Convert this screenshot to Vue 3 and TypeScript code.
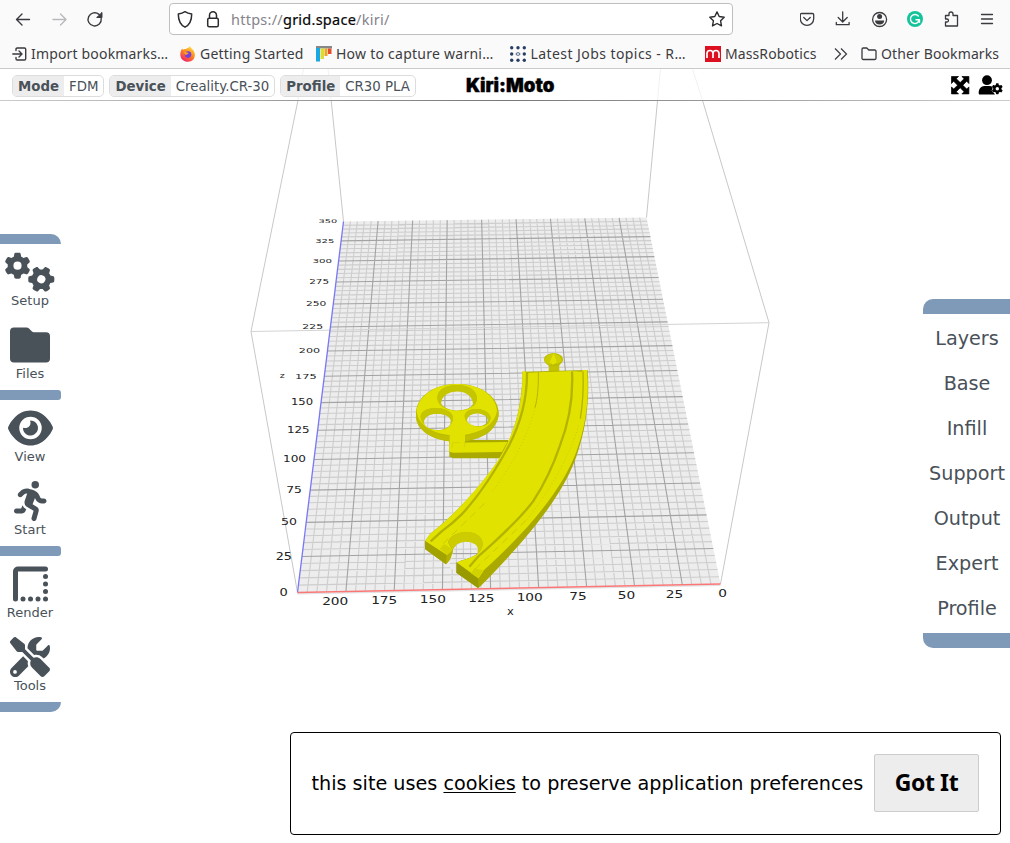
<script setup lang="ts">
interface Line { d: string; major: boolean }
interface Label { text: string; x: number; y: number; sx: number; sy: number }

// Bed corners on screen, in the order near-left, near-right, far-right, far-left
const corners = [[297.5, 592.5], [720.5, 584], [646.5, 217.5], [343.5, 221.5]]
const bedWidth = 220
const bedDepth = 350

function makeProjection(c: number[][]) {
  const [[x0, y0], [x1, y1], [x2, y2], [x3, y3]] = c
  const dx1 = x1 - x2, dx2 = x3 - x2, sx = x0 - x1 + x2 - x3
  const dy1 = y1 - y2, dy2 = y3 - y2, sy = y0 - y1 + y2 - y3
  const det = dx1 * dy2 - dx2 * dy1
  const g = (sx * dy2 - dx2 * sy) / det
  const h = (dx1 * sy - sx * dy1) / det
  return (u: number, v: number): [number, number] => {
    const w = g * u + h * v + 1
    return [
      ((x1 - x0 + g * x1) * u + (x3 - x0 + h * x3) * v + x0) / w,
      ((y1 - y0 + g * y1) * u + (y3 - y0 + h * y3) * v + y0) / w,
    ]
  }
}
const project = makeProjection(corners)

function segment(a: [number, number], b: [number, number]): string {
  return `M${a[0].toFixed(2)} ${a[1].toFixed(2)}L${b[0].toFixed(2)} ${b[1].toFixed(2)}`
}

const lines: Line[] = []
for (let x = 5; x < bedWidth; x += 5) {
  lines.push({ d: segment(project(x / bedWidth, 0), project(x / bedWidth, 1)), major: x % 25 === 0 })
}
for (let z = 5; z < bedDepth; z += 5) {
  lines.push({ d: segment(project(0, z / bedDepth), project(1, z / bedDepth)), major: z % 25 === 0 })
}
const minor = lines.filter(l => !l.major).map(l => l.d).join('')
const major = lines.filter(l => l.major).map(l => l.d).join('')

const depthRows: [number, number, number][] = [
  [0, 283.7, 591.8], [25, 283.8, 556], [50, 289, 522], [75, 294, 489.5], [100, 294.5, 459],
  [125, 298.2, 430], [150, 302, 402.2], [175, 305.8, 376], [200, 309.5, 350.6], [225, 312.8, 326.6],
  [250, 316.2, 303.6], [275, 319.2, 281.5], [300, 322.3, 260.6], [325, 324.8, 240.5], [350, 327.8, 221.2],
]
const labels: Label[] = depthRows.map(([n, x, y]) => ({
  text: String(n), x, y, sx: 1.3 - (n / 350) * 0.32, sy: 1.02 - (n / 350) * 0.5,
}))
const widthRows: [string, number, number][] = [
  ['200', 335.2, 601.5], ['175', 384.2, 600.2], ['150', 432.8, 599.4], ['125', 481.4, 598.6],
  ['100', 529.7, 597.4], ['75', 578, 596.6], ['50', 626.5, 595.6], ['25', 674.5, 594.7], ['0', 722.5, 593.7],
]
for (const [text, x, y] of widthRows) labels.push({ text, x, y, sx: 1.37, sy: 1.02 })
labels.push({ text: 'x', x: 510.5, y: 611, sx: 1.15, sy: 1 })
labels.push({ text: 'z', x: 282.2, y: 374.8, sx: 0.95, sy: 0.75 })

const gear = 'M495.9 166.6c3.2 8.7 .5 18.4-6.4 24.6l-43.3 39.4c1.1 8.3 1.7 16.8 1.7 25.4s-.6 17.1-1.7 25.4l43.3 39.4c6.9 6.2 9.6 15.9 6.4 24.6c-4.4 11.9-9.7 23.3-15.8 34.3l-4.7 8.1c-6.6 11-14 21.4-22.1 31.2c-5.9 7.2-15.7 9.6-24.5 6.8l-55.7-17.7c-13.4 10.3-28.2 18.9-44 25.4l-12.5 57.1c-2 9.1-9 16.3-18.2 17.8c-13.8 2.3-28 3.5-42.5 3.5s-28.7-1.2-42.5-3.5c-9.2-1.5-16.2-8.7-18.2-17.8l-12.5-57.1c-15.8-6.5-30.6-15.1-44-25.4L83.1 425.9c-8.8 2.8-18.6 .3-24.5-6.8c-8.1-9.8-15.5-20.2-22.1-31.2l-4.7-8.1c-6.1-11-11.4-22.4-15.8-34.3c-3.2-8.7-.5-18.4 6.4-24.6l43.3-39.4C64.6 273.1 64 264.6 64 256s.6-17.1 1.7-25.4L22.4 191.2c-6.9-6.2-9.6-15.9-6.4-24.6c4.4-11.9 9.7-23.3 15.8-34.3l4.7-8.1c6.6-11 14-21.4 22.1-31.2c5.9-7.2 15.7-9.6 24.5-6.8l55.7 17.7c13.4-10.3 28.2-18.9 44-25.4l12.5-57.1c2-9.1 9-16.3 18.2-17.8C227.3 1.2 241.5 0 256 0s28.7 1.2 42.5 3.5c9.2 1.5 16.2 8.7 18.2 17.8l12.5 57.1c15.8 6.5 30.6 15.1 44 25.4l55.7-17.7c8.8-2.8 18.6-.3 24.5 6.8c8.1 9.8 15.5 20.2 22.1 31.2l4.7 8.1c6.1 11 11.4 22.4 15.8 34.3zM256 336a80 80 0 1 0 0-160 80 80 0 1 0 0 160z'

const settings = [
  { name: 'Mode', value: 'FDM' },
  { name: 'Device', value: 'Creality.CR-30' },
  { name: 'Profile', value: 'CR30 PLA' },
]
const sections = ['Layers', 'Base', 'Infill', 'Support', 'Output', 'Expert', 'Profile']
</script>

<template>
  <div class="window">
    <header class="browser">
      <div class="navrow">
        <svg class="nav" viewBox="0 0 165 38" fill="none" stroke="#3a3a3f" stroke-width="1.4" stroke-linecap="round" stroke-linejoin="round">
          <path d="M29.5 19.5H17M22 14l-5.5 5.5L22 25" />
          <path d="M53 19.5h12.500M60.500 14l5.500 5.500-5.500 5.500" stroke="#b9b9bb" />
          <path d="M101.200 18.500a6.600 6.600 0 1 1-2.200-4.100l2.500 2.400M101.700 13v4.300h-4.300" />
          <path d="M101.700 12.800v4.700H97z" fill="#3a3a3f" stroke-width=".6" />
        </svg>
        <div class="address">
          <svg class="guard" viewBox="0 0 56 30" fill="none" stroke="#2b2b30" stroke-width="1.500" stroke-linejoin="round">
            <path d="M15 7.700c-2 1.400-4.200 2-6.700 2.200 0 6.300 1.400 10.500 6.700 13.300 5.300-2.800 6.700-7 6.700-13.300-2.500-.2-4.700-.8-6.700-2.200z" />
            <rect x="37.700" y="14.200" width="10.600" height="8.600" rx="1.500" />
            <path d="M39.500 14v-2.700a3.500 3.500 0 0 1 7 0V14" />
          </svg>
          <span class="url">https://<b>grid.space</b>/kiri/</span>
          <svg class="star" viewBox="0 0 18 18" fill="none" stroke="#2b2b30" stroke-width="1.400" stroke-linejoin="round">
            <path d="M9 1.900l2.200 4.600 5 .7-3.600 3.600.9 5.100L9 13.500l-4.500 2.400.9-5.100L1.800 7.200l5-.7z" />
          </svg>
        </div>
        <svg class="tools" viewBox="0 0 210 38" fill="none" stroke="#3a3a3f" stroke-width="1.300" stroke-linecap="round" stroke-linejoin="round">
          <path d="M1.500 13.500h11a1.200 1.200 0 0 1 1.200 1.200v4a6.700 6.700 0 0 1-13.400 0v-4a1.200 1.200 0 0 1 1.200-1.200zM3.800 17.500L7 20.600l3.200-3.100" />
          <path d="M42.700 11.800v10M38.200 17.500l4.500 4.500 4.500-4.500M36.300 22.500v2.200h12.800v-2.200" />
          <circle cx="79.600" cy="19.500" r="7" />
          <circle cx="79.600" cy="16.500" r="2.500" fill="#3a3a3f" stroke="none" />
          <path d="M75 20.400h9.200c0 2.600-2 4-4.600 4s-4.600-1.400-4.600-4z" fill="#3a3a3f" stroke="none" />
          <circle cx="115" cy="19" r="8" fill="#15c39a" stroke="none" />
          <path d="M118.300 16a4.500 4.500 0 1 0 1.100 3.700H116M119.500 19.700v2.500" stroke="#fff" stroke-width="1.400" />
          <path d="M145.500 15.500h3.500v-1.500a2 2 0 0 1 4 0v1.500h4.500v10.500h-12v-4h1.500a1.500 1.500 0 0 0 0-3h-1.500z" />
          <path d="M181.500 14.500h11M181.500 19h11M181.500 23.500h11" />
        </svg>
      </div>
      <nav class="bookmarks">
        <a class="mark m1">
          <svg viewBox="0 0 16 16" fill="none" stroke="#3a3a3f" stroke-width="1.400" stroke-linecap="round" stroke-linejoin="round">
            <path d="M4 4.500V3.200A1.200 1.200 0 0 1 5.200 2h7.300a1.200 1.200 0 0 1 1.200 1.200v9.600a1.200 1.200 0 0 1-1.200 1.200H5.200A1.200 1.200 0 0 1 4 12.800v-1.300M.8 8h8.700M7 5l3 3-3 3" />
          </svg><span>Import bookmarks…</span>
        </a>
        <a class="mark m2">
          <svg viewBox="0 0 16 16">
            <defs><linearGradient id="flame" x1=".8" y1="0" x2=".2" y2="1"><stop offset="0" stop-color="#ffe43d" /><stop offset=".45" stop-color="#ff8a1f" /><stop offset="1" stop-color="#f0196d" /></linearGradient></defs>
            <path d="M8.500 1.800C9 1 9.500.5 10 .2c.5 1.800 2.500 2.600 3.800 4.800 2.800 4.900 0 10.700-5.700 10.700C3.500 15.700.3 12.600.3 8.400c0-2.300.6-4.300 2-6 .2.700.3 1 .7 1.400 1-.7 1.900-.8 2.900-.6.500-.7 1.500-1.200 2.600-1.400z" fill="url(#flame)" />
            <circle cx="8" cy="8.600" r="3.300" fill="#7442d8" /><path d="M3.500 6.200c2-1 3.500.2 5.200 1.400-1.200.7-2 .8-3 1.700z" fill="#ff9a25" />
          </svg><span>Getting Started</span>
        </a>
        <a class="mark m3">
          <svg viewBox="0 0 16 16"><path d="M0 0h16v2.500H0z" fill="#888" /><path d="M0 2h4v13.500H0z" fill="#19a7e5" /><path d="M4.500 2.500h3.500v10.500H4.500z" fill="#dbdc35" /><path d="M8.500 2.500h3v7.500h-3z" fill="#efa51f" /><path d="M12 2.500h3.500v5.500H12z" fill="#e44e2b" /></svg>
          <span>How to capture warni…</span>
        </a>
        <a class="mark m4">
          <svg viewBox="0 0 16 16" fill="#283f63"><circle v-for="n in 3" :key="'t' + n" :cx="n * 6.300 - 4.600" cy="1.800" r="1.700" /><circle v-for="n in 3" :key="'b' + n" :cx="n * 6.300 - 4.600" cy="14.300" r="1.700" /><circle cx="1.700" cy="8" r="1.700" /><circle cx="14.300" cy="8" r="1.700" /><ellipse cx="8" cy="8" rx="2" ry="1.300" fill="none" stroke="#283f63" stroke-width=".8" /></svg>
          <span>Latest Jobs topics - R…</span>
        </a>
        <a class="mark m5">
          <svg viewBox="0 0 16 16"><path d="M0 0h16v16H0z" fill="#dd1021" /><path d="M2 12V7.500a3 3 0 0 1 6 0V12M8 7.500a3 3 0 0 1 6 0V12" fill="none" stroke="#fff" stroke-width="1.700" /></svg>
          <span>MassRobotics</span>
        </a>
        <svg class="more" viewBox="0 0 14 14" fill="none" stroke="#3a3a3f" stroke-width="1.200"><path d="M1 1.500L6.500 7 1 12.500M7 1.500L12.500 7 7 12.500" /></svg>
        <a class="mark m6">
          <svg viewBox="0 0 16 16" fill="none" stroke="#3a3a3f" stroke-width="1.300" stroke-linejoin="round"><path d="M1 3.200A1.200 1.200 0 0 1 2.200 2h3.600l2 2h6a1.200 1.200 0 0 1 1.200 1.200v7.100a1.200 1.200 0 0 1-1.200 1.200H2.200A1.200 1.200 0 0 1 1 12.300z" /></svg>
          <span>Other Bookmarks</span>
        </a>
      </nav>
    </header>

    <main class="app">
      <svg class="scene" viewBox="0 69 1010 774">
        <path d="M297.500 592.500L720.500 584L646.500 217.500L343.500 221.500Z" fill="#ededed" />
        <g fill="none">
          <path :d="minor" stroke="#cdcdcd" stroke-width="1.100" />
          <path :d="major" stroke="#a3a3a3" stroke-width="1.100" />
          <path d="M251 331.500L769 322.700" stroke="#d3d3d3" />
          <path d="M303.500 69L298 100L251 331.500L297.500 592.500M328 69L343.500 221.500M660.500 69L646.500 217.500M692.500 69L703 102L769 322.700L720.500 584" stroke="#c8c8c8" />
          <path d="M297.500 593.800L720.500 585.300" stroke="#e2e2e2" stroke-width="1.500" />
          <path d="M343.500 221.500L297.500 592.500" stroke="#7777f7" stroke-width="1.300" />
          <path d="M297.500 592.500L720.500 584" stroke="#fb7777" stroke-width="1.300" />
        </g>
        <g class="ticks">
          <text v-for="(l, i) in labels" :key="i" :transform="`translate(${l.x} ${l.y}) scale(${l.sx} ${l.sy})`" x="0" y="3.650">{{ l.text }}</text>
        </g>

        <g transform="translate(400 340) scale(.33333)">
          <!-- connector peg -->
          <path d="M447 68L478 68V96H446z" fill="#c2c200" />
          <path d="M432 60C431 49 443 40 461 39C479 40 490 49 489 61C487 68 481 74 472 79H449C439 73 433 67 432 60z" fill="#bcbc00" />
          <path d="M443 46L461 39L452 76C442 71 434 65 433 59z" fill="#cccc00" />
          <path d="M461 39L449 66L458 74L474 67z" fill="#e2e200" />
          <path d="M461 39L478 47L486 62L472 72z" fill="#d0d000" />
          <!-- handle -->
          <path d="M148 300H325V355H160L148 350z" fill="#a9a900" />
          <path d="M148 308L322 306L306 336L160 338L148 335z" fill="#e2e200" />
          <!-- three hole wheel -->
          <path fill-rule="evenodd" fill="#b8b800" d="M48 219C50 168 102 132 171 132C243 132 293 170 296 215V226C290 274 240 305 171 306C102 304 52 276 48 232zM122 186C126 162 148 154 172 154C198 154 218 164 221 184C221 202 200 211 171 212C143 210 124 200 122 186zM71 247C74 229 88 220 112 221C138 222 155 230 156 242C153 260 135 270 111 270C89 269 74 262 71 247zM200 240C203 226 218 220 233 220C252 222 264 231 264 241C260 253 248 259 233 259C215 257 203 252 200 240z" />
          <path fill-rule="evenodd" fill="#e2e200" d="M50 214C54 168 105 132 171 132C240 132 287 168 291 211C290 256 240 282 172 287C105 286 54 260 50 214zM112 174C113 148 136 136 171 135C207 136 230 151 231 175C229 225 115 225 112 174zM62 230C62 214 82 203 110 204C139 205 159 218 159 234C157 255 146 264 130 269C100 276 77 264 71 250C66 245 62 238 62 230zM194 227C196 214 211 206 232 207C255 208 271 220 272 234C267 255 250 260 235 260C211 257 195 245 194 227z" />
          <path fill="#c6c600" fill-rule="evenodd" d="M112 174C113 148 136 136 171 135C207 136 230 151 231 175C230 187 224 196 218 201C224 178 204 155 172 154C143 155 118 173 125 199C116 192 112 184 112 174zM62 230C62 214 82 203 110 204C139 205 159 218 159 234C157 247 153 254 145 260C162 244 149 221 112 221C84 220 66 237 73 253C66 247 62 238 62 230zM194 227C196 214 211 206 232 207C255 208 271 220 272 234C271 244 267 250 261 253C269 236 256 220 233 220C211 220 198 231 202 247C196 241 194 234 194 227z" />
          <path d="M50 221C61 263 110 286 150 287V304C96 299 50 269 48 232zM196 286C250 279 286 247 292 211L296 220C292 266 249 296 194 303z" fill="#c0c000" />
          <path d="M149 280H195V321L187 335H149z" fill="#e2e200" />
          <path d="M157 323V308H181M194 304V322" fill="none" stroke="#d0d000" stroke-width="2" />
          <!-- curved track -->
          <path d="M368 95L563 90C569 170 561 260 529 350C493 452 412 567 235 745L169 698V667L228 645L238 604L153 640L151 658L138 673L75 627V604L90 582C155 532 220 462 273 392C327 323 365 232 368 95z" fill="#aaa900" />
          <path fill="#e2e200" d="M367 94L383 95L385 98L413 97L515 93L544 95L549 90L561 90C568 170 560 250 529 335C494 430 408 550 252 690L235 716L169 668L178 664L203 656L228 645C243 633 249 620 248 609C244 586 224 577 196 577C168 578 146 591 145 608L158 631L141 646L75 603L90 582C158 530 218 462 272 392C323 326 370 226 367 94z" />
          <path d="M145 607C147 590 169 577 198 575C227 576 248 591 249 611C248 624 241 636 229 645L232 626C228 611 214 605 198 605C178 606 163 616 158 630z" fill="#cccc00" />
          <path d="M158 632C163 616 178 606 198 605C217 606 231 613 233 624V638C222 648 203 656 186 660L169 667V698L141 674L150 658z" fill="#ececec" />
          <path d="M161 628L233 627M154 656L198 655M150 670H169M169 614V692M190 606V658M212 608V652" stroke="#cacaca" stroke-width="3" fill="none" />
          <path d="M157 641H232" stroke="#999" stroke-width="3" />
          <path d="M75 603L140 645L138 673L75 627z" fill="#a2a200" />
          <path d="M140 646L158 627V637L151 658L139 673z" fill="#b3b300" />
          <path d="M169 667L235 715L235 745L169 698z" fill="#999900" />
          <path d="M120 627L132 612L153 624L155 634L141 645z" fill="#d2d200" />
          <path d="M213 700L223 685L249 691L235 715z" fill="#d2d200" />
          <g fill="none" stroke="#b4b400">
            <path d="M381 96C382 166 367 240 326 319C285 394 237 468 185 523C164 544 143 561 125 574L92 604" stroke-width="7" />
            <path d="M516 94C520 170 509 243 479 319C460 375 430 437 400 483C378 513 325 567 285 604C267 621 247 638 236 648L208 680" stroke-width="7" />
            <path d="M415 96C416 140 412 178 405 203" stroke-width="3" />
            <path d="M549 94C551 145 548 194 541 236" stroke-width="4" />
            <path d="M405 203C388 279 340 371 275 457M535 257C520 322 463 434 380 540" stroke-width="1.500" stroke-dasharray="3 7" />
            <path d="M254 490L128 612M378 541L220 692" stroke-width="1.500" stroke-dasharray="22 16" />
          </g>
        </g>
      </svg>

      <div class="topbar">
        <div v-for="s in settings" :key="s.name" class="pill"><b>{{ s.name }}</b><span>{{ s.value }}</span></div>
        <div class="brand">Kiri:Moto</div>
        <svg class="actions" viewBox="0 0 54 24">
          <path d="M1.500 3.500h7L6.300 5.700l3.900 3.900 3.900-3.900-2.200-2.200h7v7l-2.200-2.200-3.900 3.900 3.900 3.900 2.200-2.200v7h-7l2.200-2.200-3.900-3.900-3.900 3.900 2.200 2.200h-7v-7l2.200 2.200 3.900-3.900-3.900-3.900-2.200 2.200z" stroke="#000" stroke-width=".7" />
          <circle cx="37" cy="7.200" r="4.900" />
          <path d="M34.500 13h5c1.500 0 2.800.4 3.900 1.200-1.700 1.500-1.300 3.500-.4 4.600l2 2.700H30c-.8 0-1.300-.6-1.300-1.300 0-4.200 2.200-7.200 5.800-7.200z" />
          <path :d="gear" transform="translate(41.800 10.200) scale(.0215)" stroke="#fff" stroke-width="35" paint-order="stroke" />
        </svg>
      </div>

      <aside class="left">
        <div class="bar first"></div>
        <div class="item">
          <svg viewBox="0 0 60 42"><path :d="gear" transform="translate(17.500 14.700) scale(.051) translate(-256 -256)" /><path :d="gear" transform="translate(41.300 28.300) rotate(30) scale(.051) translate(-256 -256)" /></svg>
          <span>Setup</span>
        </div>
        <div class="item">
          <svg viewBox="0 0 60 42"><path d="M14 3.500h12.500c1 0 1.800.4 2.500 1l3 3c.5.500 1 .7 1.800.7H46a4 4 0 0 1 4 4v22.300a4 4 0 0 1-4 4H14a4 4 0 0 1-4-4v-27a4 4 0 0 1 4-4z" /></svg>
          <span>Files</span>
        </div>
        <div class="bar"></div>
        <div class="item">
          <svg viewBox="0 0 60 42"><path transform="translate(8 1) scale(.0781)" d="M288 32c-80.800 0-145.500 36.800-192.600 80.600C48.600 156 17.300 208 2.500 243.700c-3.300 7.900-3.300 16.700 0 24.600C17.300 304 48.600 356 95.400 399.400C142.500 443.200 207.200 480 288 480s145.500-36.800 192.600-80.600c46.800-43.500 78.100-95.400 93-131.100c3.300-7.900 3.300-16.700 0-24.600c-14.900-35.700-46.200-87.700-93-131.100C433.500 68.800 368.800 32 288 32zM144 256a144 144 0 1 1 288 0 144 144 0 1 1-288 0zm144-64c0 35.300-28.700 64-64 64c-7.100 0-13.900-1.200-20.300-3.300c-5.500-1.800-11.900 1.600-11.700 7.400c.3 6.900 1.300 13.800 3.200 20.700c13.700 51.200 66.400 81.600 117.600 67.900s81.600-66.400 67.900-117.600c-11.100-41.500-47.800-69.400-88.600-71.100c-5.800-.2-9.200 6.100-7.400 11.700c2.100 6.400 3.300 13.200 3.300 20.300z" /></svg>
          <span>View</span>
        </div>
        <div class="item">
          <svg viewBox="0 0 60 42"><path transform="translate(14 1) scale(.0781)" d="M320 48a48 48 0 1 0-96 0 48 48 0 1 0 96 0zM125.700 175.500c9.900-9.900 23.400-15.500 37.500-15.500c1.900 0 3.800 .1 5.600 .3L137.600 254c-9.300 28 1.700 58.800 26.800 74.500l86.200 53.900-25.400 88.800c-4.900 17 5 34.700 22 39.600s34.700-5 39.600-22l28.700-100.400c5.900-20.600-2.600-42.600-20.700-53.900L238 299l30.900-82.400 5.100 12.300C289 264.700 323.900 288 362.700 288H384c17.700 0 32-14.300 32-32s-14.300-32-32-32H362.700c-12.900 0-24.600-7.800-29.500-19.700l-6.300-15c-14.600-35.100-44.100-61.900-80.500-73.100l-48.700-15c-11.100-3.400-22.700-5.200-34.400-5.200c-31 0-60.800 12.300-82.700 34.300L57.400 153.400c-12.500 12.500-12.500 32.800 0 45.300s32.800 12.500 45.300 0l23.100-23.100zM91.200 352H32c-17.700 0-32 14.300-32 32s14.300 32 32 32h69.600c19 0 36.200-11.200 43.900-28.500L157 361.600l-9.500-6c-17.500-10.900-30.500-26.800-37.900-44.900L91.200 352z" /></svg>
          <span>Start</span>
        </div>
        <div class="bar"></div>
        <div class="item">
          <svg viewBox="0 0 60 42"><path d="M15.500 36V8.500a2.500 2.500 0 0 1 2.500-2.500h27.500" fill="none" stroke="#495159" stroke-width="5" stroke-linecap="round" /><circle v-for="n in 4" :key="n" :cx="15.500 + n * 7.500" cy="36" r="2.500" /><circle v-for="n in 3" :key="'v' + n" cx="45.500" :cy="6 + n * 7.500" r="2.500" /></svg>
          <span>Render</span>
        </div>
        <div class="item">
          <svg viewBox="0 0 60 42"><path transform="translate(10 1) scale(.0781)" fill-rule="evenodd" d="M78.600 5C69.100-2.400 55.600-1.500 47 7L7 47c-8.500 8.500-9.400 22-2.100 31.600l80 104c4.500 5.900 11.600 9.400 19 9.400h54.100l109 109c-14.700 29-10 65.400 14.300 89.600l112 112c12.500 12.500 32.800 12.500 45.300 0l64-64c12.500-12.500 12.500-32.800 0-45.300l-112-112c-24.200-24.200-60.600-29-89.600-14.300l-109-109V104c0-7.500-3.500-14.500-9.400-19L78.600 5zM19.900 396.100C7.200 408.800 0 426.100 0 444.100C0 481.600 30.400 512 67.900 512c18 0 35.300-7.200 48-19.900L233.700 374.300c-7.800-20.900-9-43.600-3.600-65.100l-61.700-61.700L19.900 396.100zM512 144c0-10.500-1.100-20.700-3.200-30.500c-2.400-11.200-16.100-14.100-24.200-6l-63.900 63.900c-3 3-7.100 4.700-11.300 4.700H352c-8.800 0-16-7.200-16-16V102.600c0-4.200 1.700-8.300 4.700-11.300l63.900-63.900c8.100-8.100 5.200-21.800-6-24.200C388.700 1.100 378.500 0 368 0C288.500 0 224 64.500 224 144l0 .8 85.300 85.300c36-9.100 75.800 .5 104 28.700L429 274.500c49-23 83-72.800 83-130.500zM40 448a24 24 0 1 1 48 0 24 24 0 1 1-48 0z" /></svg>
          <span>Tools</span>
        </div>
        <div class="bar last"></div>
      </aside>

      <aside class="right">
        <div class="cap top"></div>
        <div v-for="s in sections" :key="s" class="section">{{ s }}</div>
        <div class="cap bottom"></div>
      </aside>

      <div class="cookie">
        <span class="notice">this site uses <u>cookies</u> to preserve application preferences</span>
        <button class="accept">Got It</button>
      </div>
    </main>
  </div>
</template>

<style>
body { margin: 0; background: #fff; overflow: hidden; }
</style>

<style scoped>
.window { width: 1010px; height: 843px; display: flex; flex-direction: column; font-family: "DejaVu Sans", sans-serif; color: #495159; overflow: hidden; }
.browser { height: 68px; flex: none; background: #fbfafb; border-bottom: 1px solid #cacaca; font-family: "Noto Sans", sans-serif; color: #3c3c3f; }
.navrow { height: 38px; display: flex; align-items: flex-start; }
.nav { width: 165px; height: 38px; margin-right: 4px; }
.address { width: 562px; height: 30px; margin-top: 3px; border: 1px solid #bfbfc2; border-radius: 4px; background: #fff; display: flex; align-items: center; }
.guard { width: 56px; height: 30px; }
.url { margin-left: 5px; flex: 1; font-size: 14.500px; letter-spacing: .25px; line-height: 30px; color: #84848a; white-space: nowrap; }
.url b { font-weight: 400; color: #050505; -webkit-text-stroke: .2px #050505; }
.star { width: 18px; height: 18px; margin-right: 6px; }
.tools { width: 210px; height: 38px; margin-left: 67px; }
.bookmarks { height: 32px; display: flex; align-items: center; }
.mark { display: flex; align-items: center; gap: 4px; font-size: 14px; white-space: nowrap; flex: none; line-height: 30px; }
.mark svg { width: 16px; height: 16px; flex: none; }
.m1 { width: 168px; margin-left: 12px; gap: 3px; letter-spacing: .17px; }
.m2 { width: 136px; letter-spacing: .2px; }
.m3 { width: 193.500px; letter-spacing: .25px; }
.m4 { width: 195.500px; letter-spacing: .43px; gap: 5px; }
.m5 { width: 129px; letter-spacing: .1px; }
.more { width: 14px; height: 14px; margin-right: 13px; }
.m6 { width: 140px; letter-spacing: .12px; }
.app { position: relative; flex: 1; }
.scene { display: block; width: 1010px; height: 774px; }
.ticks text { font: 10px "DejaVu Sans", sans-serif; fill: #222; text-anchor: middle; }
.topbar { position: absolute; left: 0; top: 0; width: 998px; height: 31px; padding-left: 12px; display: flex; align-items: center; background: rgba(255, 255, 255, .75); border-bottom: 1px solid; border-image: linear-gradient(to right, #ccc, #777 50%, #ccc) 1; }
.pill { height: 20px; display: flex; border: 1px solid #ddd; border-radius: 5px; overflow: hidden; margin-right: 5px; font-size: 13.333px; line-height: 21px; margin-top: 2px; background: #fff; white-space: nowrap; }
.pill b { background: #ededed; padding: 0 5px; }
.pill span { padding: 0 5px; }
.brand { margin-left: 45px; width: 90px; font: 900 18.600px/30px Inter, sans-serif; color: #000; -webkit-text-stroke: .4px #000; white-space: nowrap; }
.actions { width: 54px; height: 24px; margin-left: auto; margin-right: 6px; fill: #000; }
.left { position: absolute; left: 0; top: 165px; width: 61px; }
.bar { height: 10px; background: #7f99b9; border-radius: 0 3px 3px 0; }
.bar.first { border-radius: 0 10px 0 0; }
.bar.last { border-radius: 0 0 10px 0; }
.item { width: 60px; height: 73px; display: flex; flex-direction: column; align-items: center; font-size: 13px; }
.item svg { width: 60px; height: 42px; margin-top: 7px; fill: #495159; overflow: visible; }
.item span { line-height: 16px; }
.right { position: absolute; left: 923px; top: 230px; width: 87px; }
.cap { height: 15px; background: #7f99b9; }
.cap.top { border-radius: 10px 0 0 0; margin-bottom: 2px; }
.cap.bottom { border-radius: 0 0 0 10px; margin-top: 2px; }
.section { height: 45px; line-height: 45px; padding-left: 1px; text-align: center; font-size: 19.200px; white-space: nowrap; }
.cookie { position: absolute; left: 290px; top: 663px; width: 709px; height: 101px; border: 1px solid #000; border-radius: 4px; background: #fff; display: flex; align-items: center; color: #000; }
.notice { margin: 0 0 0 20.500px; width: 551.500px; font-size: 19.200px; white-space: nowrap; }
.notice u { text-underline-offset: 2px; text-decoration-thickness: 1px; }
.accept { width: 105px; height: 58px; margin: 0 0 2px 11px; padding: 0 0 2px; border: 1px solid #ccc; border-radius: 2px; background: #ededed; font: 700 23px "Noto Sans", sans-serif; letter-spacing: -.4px; color: #000; }
</style>
